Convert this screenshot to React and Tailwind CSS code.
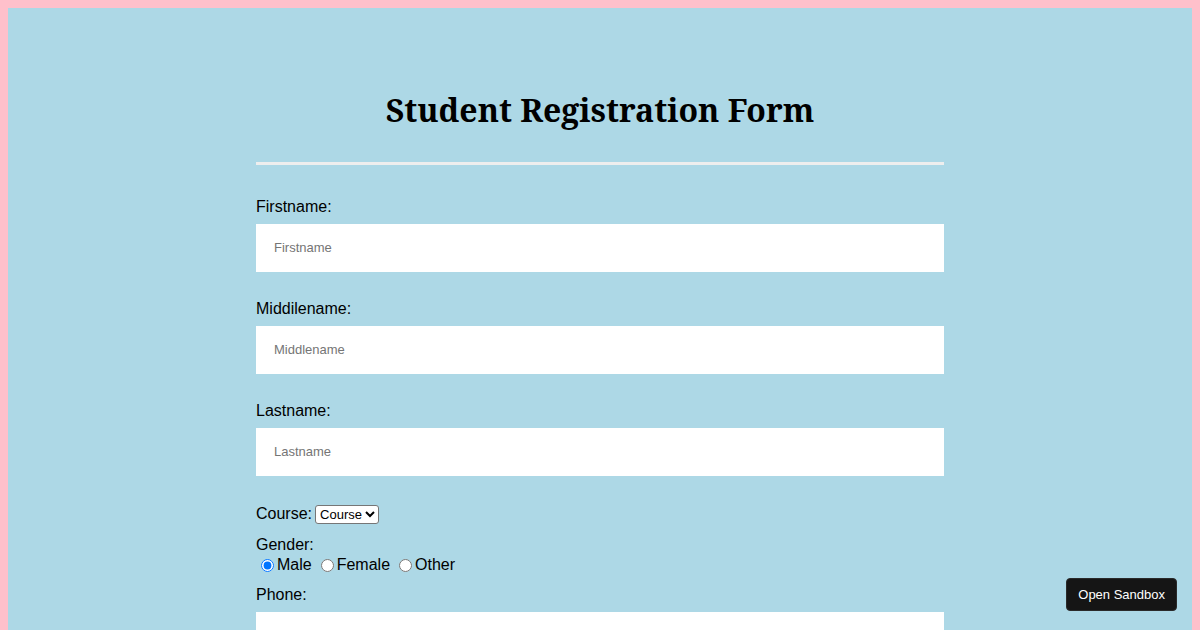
export default function App() {
  return (
    <div className="min-h-[700px] bg-[#ffc0cb] p-2 font-['Liberation_Sans',Arial,sans-serif] text-black">
      <div className="min-h-[700px] bg-[#add8e6] pt-[78px] pb-10">
        <form className="mx-auto w-[688px]" onSubmit={(e) => e.preventDefault()}>
          <h1 className="h-[48px] text-center font-['Noto_Serif','DejaVu_Serif',serif] text-[32px] font-bold leading-[48px]">
            Student Registration Form
          </h1>
          <hr className="mt-[28px] h-[3px] border-0 bg-[#eeeeee]" />

          <div className="mt-[33px]">
            <label className="block text-[16px] leading-[18px]">Firstname:</label>
            <input
              type="text"
              placeholder="Firstname"
              className="mt-[8px] block h-[48px] w-full bg-white pb-[2px] pl-[18px] text-[13px] outline-none placeholder:text-[#757575]"
            />
          </div>

          <div className="mt-[28px]">
            <label className="block text-[16px] leading-[18px]">Middilename:</label>
            <input
              type="text"
              placeholder="Middlename"
              className="mt-[8px] block h-[48px] w-full bg-white pb-[2px] pl-[18px] text-[13px] outline-none placeholder:text-[#757575]"
            />
          </div>

          <div className="mt-[28px]">
            <label className="block text-[16px] leading-[18px]">Lastname:</label>
            <input
              type="text"
              placeholder="Lastname"
              className="mt-[8px] block h-[48px] w-full bg-white pb-[2px] pl-[18px] text-[13px] outline-none placeholder:text-[#757575]"
            />
          </div>

          <div className="mt-[29px] flex h-[18px] items-center text-[16px] leading-[18px]">
            <span>Course:</span>
            <select className="ml-[3px] h-[19px] rounded-[3px] border border-[#767676] bg-white text-[13px] leading-[15px]">
              <option>Course</option>
              <option>BCA</option>
              <option>BBA</option>
              <option>B.Tech</option>
            </select>
          </div>

          <div className="mt-[13px] text-[16px] leading-[18px]">
            <div>Gender:</div>
            <div className="mt-[2px] flex h-[18px] items-center">
              <input type="radio" name="gender" defaultChecked className="ml-[5px] mr-[3px] h-[13px] w-[13px]" />
              <span>Male</span>
              <input type="radio" name="gender" className="ml-[9px] mr-[3px] h-[13px] w-[13px]" />
              <span>Female</span>
              <input type="radio" name="gender" className="ml-[9px] mr-[3px] h-[13px] w-[13px]" />
              <span>Other</span>
            </div>
          </div>

          <div className="mt-[12px]">
            <label className="block text-[16px] leading-[18px]">Phone:</label>
            <input
              type="tel"
              className="mt-[8px] block h-[48px] w-full bg-white pl-[18px] text-[13px] outline-none"
            />
          </div>
        </form>
      </div>

      <button className="fixed bottom-[19px] right-[23px] h-[33px] rounded-[4px] border border-[#2a2a2a] bg-[#151515] px-[11px] text-[13px] text-white">
        Open Sandbox
      </button>
    </div>
  );
}
